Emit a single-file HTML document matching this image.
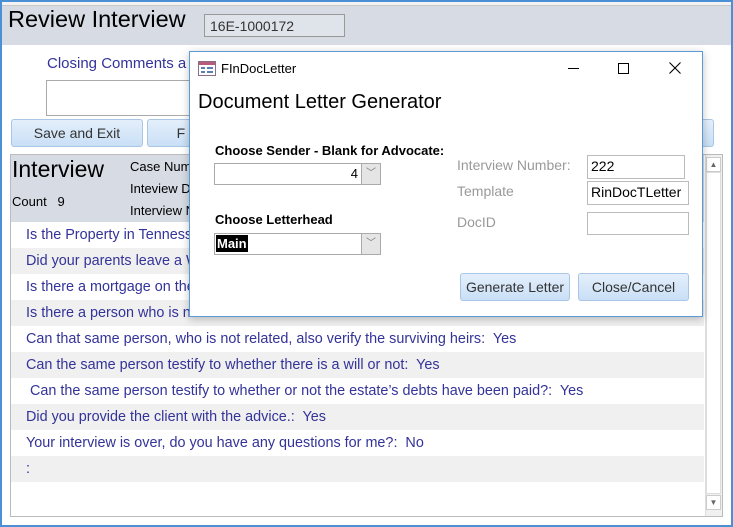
<!DOCTYPE html>
<html><head><style>
*{box-sizing:border-box;margin:0;padding:0}
body{width:733px;height:527px;position:relative;overflow:hidden;background:#fff;font-family:"Liberation Sans",Arial,sans-serif}
.a{position:absolute}
.btn{position:absolute;border:1px solid #a9c6e6;border-radius:3px;background:linear-gradient(#e4effb,#c9dff6);color:#333;font-size:14px;text-align:center}
.row{position:absolute;left:11px;width:693px;height:26px;color:#333399;font-size:14.4px;padding-left:15px;line-height:26px}
.g{background:#f0f0f0}
.lbl{position:absolute;color:#999;font-size:14px}
.tb{position:absolute;border:1px solid #bbb;background:#fff;font-size:14px;padding:2px 3px}
</style></head><body>
<div class="a" style="left:0;top:0;width:733px;height:527px;border:2px solid #4b8fd4"></div>
<div class="a" style="left:2px;top:2px;width:729px;height:4px;background:#f3f3f3;border-bottom:1px solid #c8c8c8"></div>
<div class="a" style="left:2px;top:6px;width:729px;height:39px;background:#d6dbe4"></div>
<div class="a" style="left:8px;top:6px;font-size:23.5px;color:#000">Review Interview</div>
<div class="a" style="left:204px;top:14px;width:141px;height:23px;border:1px solid #999;background:#dfe3ea;font-size:14px;padding:3px 5px;color:#333">16E-1000172</div>
<div class="a" style="left:47px;top:55px;font-size:15px;color:#333399">Closing Comments a</div>
<div class="a" style="left:46px;top:80px;width:160px;height:36px;border:1px solid #aaa;background:#fff"></div>
<div class="btn" style="left:11px;top:119px;width:132px;height:28px;line-height:26px">Save and Exit</div>
<div class="btn" style="left:147px;top:119px;width:60px;height:28px;line-height:26px">&nbsp;&nbsp;F</div>
<div class="btn" style="left:690px;top:119px;width:24px;height:28px"></div>
<div class="a" style="left:10px;top:154px;width:713px;height:363px;border:1px solid #bbb;background:#fff"></div>
<div class="a" style="left:11px;top:155px;width:693px;height:67px;background:#d6dbe4"></div>
<div class="a" style="left:12px;top:156px;font-size:23px">Interview</div>
<div class="a" style="left:12px;top:194px;font-size:13px">Count &nbsp;&nbsp;9</div>
<div class="a" style="left:130px;top:159px;font-size:13px">Case Num</div>
<div class="a" style="left:130px;top:181px;font-size:13px">Inteview D</div>
<div class="a" style="left:130px;top:203px;font-size:13px">Interview N</div>
<div class="row" style="top:222px">Is the Property in Tennessee</div>
<div class="row g" style="top:248px">Did your parents leave a W</div>
<div class="row" style="top:274px">Is there a mortgage on the</div>
<div class="row g" style="top:300px">Is there a person who is n</div>
<div class="row" style="top:326px">Can that same person, who is not related, also verify the surviving heirs:&nbsp; Yes</div>
<div class="row g" style="top:352px">Can the same person testify to whether there is a will or not:&nbsp; Yes</div>
<div class="row" style="top:378px">&nbsp;Can the same person testify to whether or not the estate’s debts have been paid?:&nbsp; Yes</div>
<div class="row g" style="top:404px">Did you provide the client with the advice.:&nbsp; Yes</div>
<div class="row" style="top:430px">Your interview is over, do you have any questions for me?:&nbsp; No</div>
<div class="row g" style="top:456px">:</div>
<div class="a" style="left:705px;top:155px;width:17px;height:361px;background:#f0f0f0;border-left:1px solid #ddd"></div>
<div class="a" style="left:706px;top:157px;width:15px;height:15px;background:#fff;border:1px solid #ccc;font-size:8px;color:#666;text-align:center;line-height:13px">▲</div>
<div class="a" style="left:706px;top:172px;width:15px;height:322px;background:#fff;border:1px solid #ddd"></div>
<div class="a" style="left:706px;top:495px;width:15px;height:15px;background:#fff;border:1px solid #ccc;font-size:8px;color:#666;text-align:center;line-height:13px">▼</div>

<!-- dialog -->
<div class="a" style="left:189px;top:51px;width:514px;height:266px;background:#fff;border:1px solid #5b9bd5;box-shadow:0 2px 8px rgba(0,0,0,.25)"></div>
<svg class="a" style="left:198px;top:61px" width="18" height="15"><rect x="0.5" y="0.5" width="17" height="14" fill="#fff" stroke="#8a6d8a"/><rect x="1" y="1" width="16" height="3" fill="#b85c7a"/><rect x="3" y="6" width="4" height="2" fill="#5a7fb0"/><rect x="9" y="6" width="6" height="2" fill="#5a7fb0"/><rect x="3" y="10" width="4" height="2" fill="#5a7fb0"/><rect x="9" y="10" width="6" height="2" fill="#5a7fb0"/></svg>
<div class="a" style="left:221px;top:61px;font-size:13px;color:#000">FInDocLetter</div>
<div class="a" style="left:568px;top:68px;width:11px;height:1px;background:#000"></div>
<div class="a" style="left:618px;top:63px;width:11px;height:11px;border:1px solid #000"></div>
<svg class="a" style="left:669px;top:62px" width="12" height="12"><path d="M0.5 0.5L11.5 11.5M11.5 0.5L0.5 11.5" stroke="#000" stroke-width="1.1"/></svg>
<div class="a" style="left:198px;top:91px;font-size:20px;color:#000">Document Letter Generator</div>
<div class="a" style="left:215px;top:143px;font-size:13px;font-weight:bold">Choose Sender - Blank for Advocate:</div>
<div class="a" style="left:214px;top:163px;width:167px;height:22px;border:1px solid #aaa;background:#fff;font-size:13px;text-align:right;padding:2px 22px 0 0">4</div>
<div class="a" style="left:361px;top:164px;width:19px;height:20px;background:#e5e5e5;border-left:1px solid #aaa;font-size:10px;color:#777;text-align:center;line-height:20px">﹀</div>
<div class="a" style="left:215px;top:212px;font-size:13px;font-weight:bold">Choose Letterhead</div>
<div class="a" style="left:214px;top:233px;width:167px;height:22px;border:1px solid #aaa;background:#fff"></div>
<div class="a" style="left:216px;top:235px;background:#000;color:#fff;font-size:13px;font-weight:bold;padding:0 1px;height:17px;line-height:17px">Main</div>
<div class="a" style="left:361px;top:234px;width:19px;height:20px;background:#e5e5e5;border-left:1px solid #aaa;font-size:10px;color:#777;text-align:center;line-height:20px">﹀</div>
<div class="lbl" style="left:457px;top:157px">Interview Number:</div>
<div class="lbl" style="left:457px;top:183px">Template</div>
<div class="lbl" style="left:457px;top:214px">DocID</div>
<div class="tb" style="left:587px;top:155px;width:98px;height:24px">222</div>
<div class="tb" style="left:587px;top:181px;width:102px;height:24px">RinDocTLetter</div>
<div class="tb" style="left:587px;top:212px;width:102px;height:23px"></div>
<div class="btn" style="left:460px;top:273px;width:110px;height:28px;line-height:26px">Generate Letter</div>
<div class="btn" style="left:578px;top:273px;width:111px;height:28px;line-height:26px">Close/Cancel</div>
</body></html>
